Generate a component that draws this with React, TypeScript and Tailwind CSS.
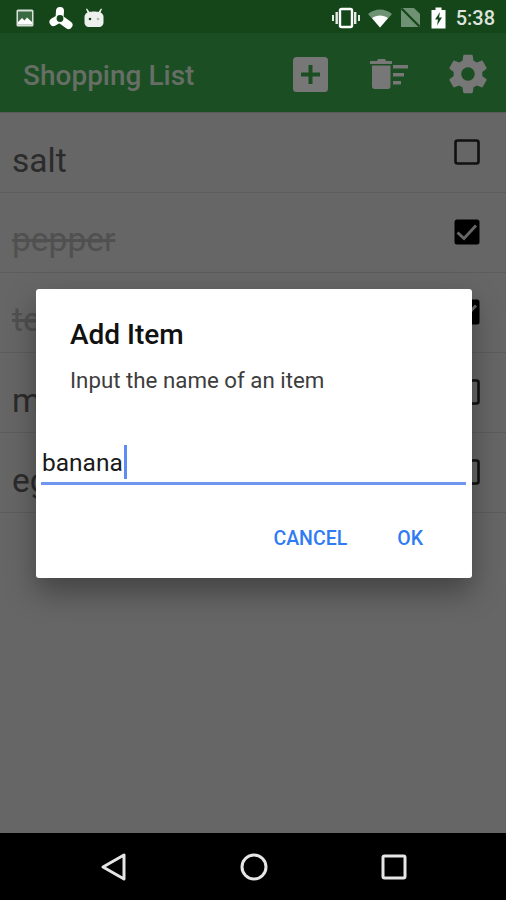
import React from 'react';

const items = [
  { name: 'salt', done: false },
  { name: 'pepper', done: true },
  { name: 'tea', done: true },
  { name: 'milk', done: false },
  { name: 'eggs', done: false },
];

const StatusIcons: React.FC = () => (
  <div className="flex h-[33px] shrink-0 items-center justify-between bg-[#144619] pl-[16px] pr-[11px] pt-[2px] text-white">
    <div className="flex items-center">
      <svg width="18" height="18" viewBox="0 0 18 18" className="mr-[14px]">
        <rect x="0.5" y="0.5" width="17" height="17" rx="1.5" fill="#d9dfd9" />
        <rect x="2" y="2.5" width="14" height="13" fill="#3b6a42" />
        <path d="M2 13 L6 9 L8.5 11.5 L11 8.5 L16 13 V15.5 H2Z" fill="#fff" />
      </svg>
      <svg width="26" height="26" viewBox="0 0 26 26" className="mr-[10px]">
        <path d="M12 6 L11.5 13.5 M5.5 17 L11.5 13.5 M20.5 20 L11.5 13.5" fill="none" stroke="#fff" strokeWidth="8" strokeLinecap="round" />
        <circle cx="12" cy="13.5" r="3.4" fill="#144619" />
      </svg>
      <svg width="20" height="20" viewBox="0 0 20 20">
        <path d="M3 0.5 L5.5 4 C7.5 3.2 12.5 3.2 14.5 4 L17 0.5 L18 1 L16.5 4.5 C18.5 5.5 19.5 7 19.5 9 V14 C19.5 17.5 17.5 19 15 19 H5 C2.5 19 0.5 17.5 0.5 14 V9 C0.5 7 1.5 5.5 3.5 4.5 L2 1Z" fill="#eef0ee" />
        <circle cx="6" cy="11" r="1.3" fill="#144619" />
        <circle cx="14" cy="11" r="1.3" fill="#a9bbac" />
      </svg>
    </div>
    <div className="flex items-center">
      <svg width="28" height="22" viewBox="0 0 28 22" className="mr-[8px]">
        <rect x="8" y="2" width="12" height="18" rx="1.5" fill="none" stroke="#fff" strokeWidth="2.4" />
        <rect x="3.5" y="5" width="2.4" height="12" fill="#e6eae6" />
        <rect x="22" y="5" width="2.4" height="12" fill="#e6eae6" />
        <rect x="0" y="8" width="2" height="6" fill="#e6eae6" />
        <rect x="26" y="8" width="2" height="6" fill="#e6eae6" />
      </svg>
      <svg width="24" height="20" viewBox="0 0 24 20" className="mr-[9px]">
        <path d="M0 6 C7 0 17 0 24 6 L12 19.5Z" fill="#6f9274" />
        <path d="M4 10 C8.5 6.5 15.5 6.5 20 10 L12 19.5Z" fill="#fff" />
      </svg>
      <svg width="19" height="19" viewBox="0 0 19 19" className="mr-[11px]">
        <path d="M0 0 H13 L19 6 V19 H0Z" fill="#6f9274" />
        <path d="M0.5 0.5 L18.5 18.5" stroke="#144619" strokeWidth="2.2" />
      </svg>
      <svg width="15" height="22" viewBox="0 0 15 22" className="mr-[10px]">
        <path d="M4.5 0.5 H10.5 V3 H14.5 V21.5 H0.5 V3 H4.5Z" fill="#fff" />
        <path d="M9 5 L4 12.5 H7 L6 18.5 L11 10.5 H8Z" fill="#144619" />
      </svg>
      <span className="font-['Roboto',sans-serif] text-[20px] font-medium leading-none text-[#dde3de]">5:38</span>
    </div>
  </div>
);

const AppBar: React.FC = () => (
  <div className="flex h-[79px] shrink-0 items-center justify-between bg-[#1b4e22] pl-[23px] pr-[15px] pt-[3px]">
    <span className="mt-[4px] font-['Roboto',sans-serif] text-[28px] font-medium leading-none text-[#666e66]">Shopping List</span>
    <div className="flex items-center">
      <svg width="35" height="35" viewBox="0 0 35 35" className="mr-[42px]">
        <rect width="35" height="35" rx="3.5" fill="#777777" />
        <path d="M15.5 8 H19.5 V15.5 H27 V19.5 H19.5 V27 H15.5 V19.5 H8 V15.5 H15.5Z" fill="#1b4e22" />
      </svg>
      <svg width="38" height="30" viewBox="0 0 38 30" className="mr-[37px]">
        <path d="M8 0 H15 L16 2 H22 V5 H0 V2 H7Z" fill="#777777" />
        <path d="M2 6.5 H20.5 V27.5 C20.5 29 19.5 30 18 30 H4.5 C3 30 2 29 2 27.5Z" fill="#777777" />
        <rect x="23" y="6" width="15" height="3.5" fill="#777777" />
        <rect x="23" y="14" width="11" height="3.5" fill="#777777" />
        <rect x="23" y="22" width="8" height="3.5" fill="#777777" />
      </svg>
      <svg width="46" height="46" viewBox="0 0 24 24">
        <path
          fill="#777777"
          d="M19.43 12.98c.04-.32.07-.64.07-.98s-.03-.66-.07-.98l2.11-1.65c.19-.15.24-.42.12-.64l-2-3.46c-.12-.22-.39-.3-.61-.22l-2.49 1c-.52-.4-1.08-.73-1.69-.98l-.38-2.65C14.46 2.18 14.25 2 14 2h-4c-.25 0-.46.18-.49.42l-.38 2.65c-.61.25-1.17.59-1.69.98l-2.49-1c-.23-.09-.49 0-.61.22l-2 3.46c-.13.22-.07.49.12.64l2.11 1.65c-.04.32-.07.65-.07.98s.03.66.07.98l-2.11 1.65c-.19.15-.24.42-.12.64l2 3.46c.12.22.39.3.61.22l2.49-1c.52.4 1.08.73 1.69.98l.38 2.65c.03.24.24.42.49.42h4c.25 0 .46-.18.49-.42l.38-2.65c.61-.25 1.17-.59 1.69-.98l2.49 1c.23.09.49 0 .61-.22l2-3.46c.12-.22.07-.49-.12-.64l-2.11-1.65zM12 15.5c-1.93 0-3.5-1.57-3.5-3.5s1.57-3.5 3.5-3.5 3.5 1.57 3.5 3.5-1.57 3.5-3.5 3.5z"
        />
      </svg>
    </div>
  </div>
);

const Check: React.FC<{ done: boolean }> = ({ done }) =>
  done ? (
    <svg width="26" height="26" viewBox="0 0 26 26">
      <rect x="0.5" y="0.5" width="25" height="25" rx="2.5" fill="#000" />
      <path d="M3.5 13.5 L10 19.5 L22 6.5" fill="none" stroke="#666" strokeWidth="3" />
    </svg>
  ) : (
    <svg width="26" height="26" viewBox="0 0 26 26">
      <rect x="1.5" y="1.5" width="23" height="23" rx="2" fill="none" stroke="#111" strokeWidth="2.6" />
    </svg>
  );

const Row: React.FC<{ name: string; done: boolean }> = ({ name, done }) => (
  <div className="flex h-[80px] items-center justify-between border-b border-[#5c5c5c] pl-[12px] pr-[26px]">
    <span
      className={
        done
          ? "mt-[16px] font-['Roboto',sans-serif] text-[33.5px] text-[#505050] line-through"
          : "mt-[17px] font-['Roboto',sans-serif] text-[33.5px] text-[#2b2b2b]"
      }
    >
      {name}
    </span>
    <div className="mb-[2px]">
      <Check done={done} />
    </div>
  </div>
);

const Dialog: React.FC = () => (
  <div className="absolute left-[36px] top-[289px] flex h-[289px] w-[436px] flex-col rounded-[3px] bg-white font-['Roboto',sans-serif] shadow-[0_14px_30px_rgba(0,0,0,0.35)]">
    <div className="ml-[34px] mt-[29px] text-[28px] font-medium leading-[34px] text-[#111111]">Add Item</div>
    <div className="ml-[34px] mt-[15px] text-[22.3px] leading-[26px] text-[#3d3d3d]">Input the name of an item</div>
    <div className="ml-[5px] mr-[6px] mt-[50px] flex h-[42px] items-end border-b-[3px] border-[#6f97f2] pb-[3px] pl-px">
      <span className="text-[24.5px] leading-[32px] text-[#1a1a1a]">banana</span>
      <span className="ml-px h-[34px] w-[3px] bg-[#5f8cf0]" />
    </div>
    <div className="mt-[41px] flex justify-end pr-[49px] text-[19.5px] font-medium leading-[26px] text-[#2f7bf2]">
      <span className="mr-[50px]">CANCEL</span>
      <span>OK</span>
    </div>
  </div>
);

const App: React.FC = () => {
  return (
    <div className="relative flex h-[900px] w-[506px] flex-col overflow-hidden bg-[#666666]">
      <StatusIcons />
      <AppBar />
      <div className="h-[1px] shrink-0 bg-[#5a5a5a]" />
      <div className="flex-1">
        {items.map((item) => (
          <Row key={item.name} name={item.name} done={item.done} />
        ))}
      </div>
      <div className="flex h-[67px] shrink-0 items-center gap-[112px] bg-black pl-[100px]">
        <svg width="28" height="30" viewBox="0 0 28 30">
          <path d="M24 3 V27 L3 15Z" fill="none" stroke="#e6e6e6" strokeWidth="3" strokeLinejoin="round" />
        </svg>
        <svg width="28" height="28" viewBox="0 0 28 28">
          <circle cx="14" cy="14" r="12" fill="none" stroke="#e6e6e6" strokeWidth="3" />
        </svg>
        <svg width="26" height="26" viewBox="0 0 26 26" className="ml-px">
          <rect x="2" y="2" width="22" height="22" rx="1.5" fill="none" stroke="#e6e6e6" strokeWidth="3" />
        </svg>
      </div>
      <Dialog />
    </div>
  );
};

export default App;
